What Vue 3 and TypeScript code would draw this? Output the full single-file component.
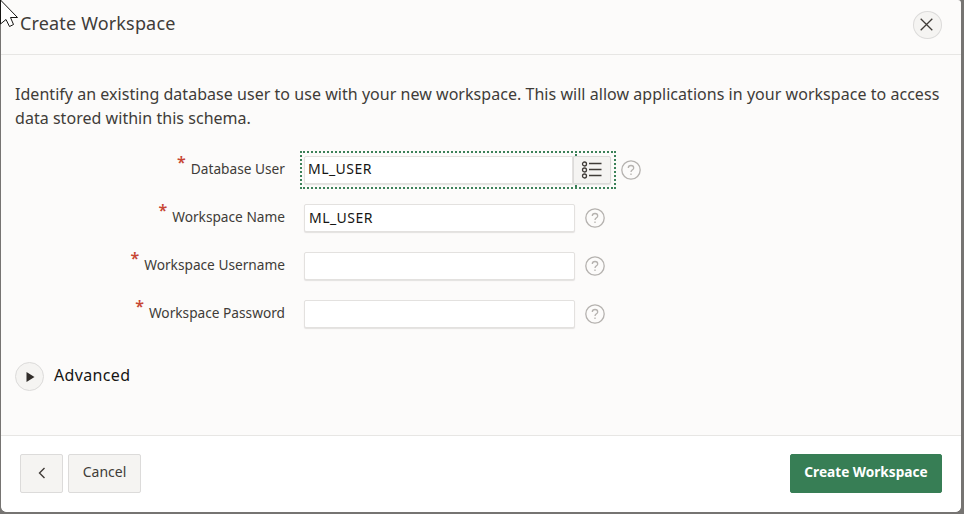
<script setup lang="ts">
import { ref } from 'vue'

interface Field {
  id: string
  label: string
  type: string
  value: string
  picker?: boolean
}

const fields = ref<Field[]>([
  { id: 'db-user', label: 'Database User', type: 'text', value: 'ML_USER', picker: true },
  { id: 'ws-name', label: 'Workspace Name', type: 'text', value: 'ML_USER' },
  { id: 'ws-username', label: 'Workspace Username', type: 'text', value: '' },
  { id: 'ws-password', label: 'Workspace Password', type: 'password', value: '' },
])
</script>

<template>
  <div class="backdrop">
    <section class="dialog" role="dialog">
      <header class="header">
        <h1 class="title">Create Workspace</h1>
        <button class="close" aria-label="Close">
          <svg width="13" height="13" viewBox="0 0 13 13"><path d="M.7 .7 12.3 12.3M12.3 .7 .7 12.3" /></svg>
        </button>
      </header>

      <main class="body">
        <p class="intro">
          <span class="line">Identify an existing database user to use with your new workspace. This will allow applications in your workspace to access</span>
          <span class="line">data stored within this schema.</span>
        </p>

        <form class="form">
          <div v-for="f in fields" :key="f.id" class="row">
            <label class="label" :for="f.id"><span class="star">*</span><span>{{ f.label }}</span></label>
            <div class="control" :class="{ picked: f.picker }">
              <input :id="f.id" v-model="f.value" class="input" :type="f.type" autocomplete="off" />
              <button v-if="f.picker" type="button" class="list" aria-label="Select">
                <svg width="22" height="20" viewBox="0 0 22 20">
                  <circle cx="3.5" cy="4" r="2" /><circle cx="3.5" cy="10" r="2" /><circle cx="3.5" cy="16" r="2" />
                  <path d="M8 3.5H20.5M8 9.5H20.5M8 15.5H20.5" />
                </svg>
              </button>
            </div>
            <svg class="help" width="20" height="20" viewBox="0 0 20 20">
              <circle cx="10" cy="10" r="9.2" />
              <path d="M7.3 8.1C7.3 6.3 8.5 5.5 10 5.5S12.7 6.4 12.7 7.9C12.7 9.9 10 9.7 10 12.1" />
              <path d="M10 13.6V15" />
            </svg>
          </div>
        </form>

        <div class="advanced">
          <button class="toggle" aria-label="Expand">
            <svg width="9" height="10" viewBox="0 0 9 10"><path d="M.5 0 8.5 5 .5 10Z" /></svg>
          </button>
          <h2 class="advanced-title">Advanced</h2>
        </div>
      </main>

      <footer class="footer">
        <button class="button back" aria-label="Back">
          <svg width="8" height="12" viewBox="0 0 8 12"><path d="M6.5 1 1.5 6 6.5 11" /></svg>
        </button>
        <button class="button cancel">Cancel</button>
        <button class="button create">Create Workspace</button>
      </footer>
    </section>
    <svg class="cursor" width="20" height="28" viewBox="0 0 20 28">
      <path d="M.5 0 17.5 17.5H10.5L13.5 24.5 9.5 26.5 6 19.5 .5 24Z" />
    </svg>
  </div>
</template>

<style>
body {
  overflow: hidden;
}
</style>

<style scoped>
.backdrop {
  position: relative;
  box-sizing: border-box;
  width: 964px;
  height: 514px;
  padding: 0 3px 2px 1px;
  background: #767472;
  color: #403c38;
  font-family: "Noto Sans", "Open Sans", sans-serif;
}
.backdrop * {
  box-sizing: border-box;
}
.dialog {
  display: flex;
  flex-direction: column;
  height: 512px;
  overflow: hidden;
  border-radius: 0 3px 6px 6px;
  background: #fcfbfa;
}
button {
  display: flex;
  align-items: center;
  justify-content: center;
  padding: 0;
  border: 1px solid #dcdbda;
  background: #f5f4f2;
  color: #403c38;
  font-family: inherit;
}
svg {
  display: block;
  fill: none;
  stroke: #403c38;
}
.header {
  display: flex;
  flex: none;
  align-items: flex-start;
  justify-content: space-between;
  height: 55px;
  padding: 11px 19px 0;
  border-bottom: 1px solid #e7e6e4;
}
.title {
  margin: 0;
  font-size: 18px;
  font-weight: 400;
  letter-spacing: 0.16px;
  line-height: 25px;
}
.close,
.toggle {
  width: 29px;
  height: 29px;
  border-radius: 50%;
}
.close {
  height: 28px;
  padding-right: 2px;
  padding-bottom: 1px;
}
.close svg {
  stroke-width: 1.3;
}
.body {
  flex: 1;
  padding: 27px 14px 0;
}
.intro {
  margin: 0 0 16px;
  font-size: 16px;
  letter-spacing: 0.037px;
  line-height: 24px;
}
.line {
  display: block;
  white-space: nowrap;
}
.row {
  display: flex;
  align-items: center;
  height: 48px;
}
.label {
  display: flex;
  align-items: flex-start;
  justify-content: flex-end;
  width: 270px;
  margin-right: 19px;
  padding-bottom: 2px;
  font-size: 13.7px;
  line-height: 20px;
  white-space: nowrap;
}
.star {
  margin-top: -7px;
  margin-right: 5px;
  color: #c74634;
  font-size: 16px;
  font-weight: 600;
  line-height: 20px;
}
.input {
  width: 271px;
  height: 28px;
  padding: 0 4px 2px;
  border: 1px solid #e3e1df;
  border-radius: 2px;
  outline: none;
  background: #fff;
  box-shadow: 0 1px 1px #e3e1df;
  color: #161513;
  font-family: inherit;
  font-size: 14px;
  letter-spacing: 0.45px;
}
.control {
  display: flex;
  margin-right: 10px;
}
.picked {
  position: relative;
  margin: 0 5px 0 -4px;
  padding: 3px 2px;
  border: 2px dotted #3c8159;
}
.picked::before,
.picked::after {
  position: absolute;
  left: 273px;
  width: 0;
  height: 2px;
  border-left: 2px solid #3c8159;
  content: "";
}
.picked::before {
  top: 1px;
}
.picked::after {
  bottom: 0;
}
.picked .input {
  width: 269px;
  padding: 0 3px 3px;
  border-radius: 2px 0 0 2px;
}
.list {
  width: 38px;
  height: 28px;
  margin-right: 1px;
  border-radius: 0 2px 2px 0;
  box-shadow: 0 1px 1px #e3e1df;
}
.list svg {
  stroke-width: 1.3;
}
.help {
  stroke: #b5b2af;
  stroke-width: 1.3;
}
.advanced {
  display: flex;
  align-items: center;
  margin-top: 23px;
  padding-top: 1px;
}
.toggle {
  padding-left: 1px;
}
.toggle svg {
  fill: #312d2a;
  stroke: none;
}
.advanced-title {
  margin: 0 0 0 10px;
  padding-bottom: 3px;
  color: #161513;
  font-size: 16px;
  font-weight: 400;
  letter-spacing: 0.35px;
  line-height: 24px;
}
.footer {
  display: flex;
  flex: none;
  gap: 5px;
  height: 77px;
  padding: 18px 19px 0;
  border-top: 1px solid #e7e6e4;
  background: #fff;
}
.button {
  height: 39px;
  padding-bottom: 4px;
  border-radius: 2px;
  font-size: 14px;
}
.back {
  width: 43px;
  padding: 0 0 1px;
}
.back svg {
  stroke-width: 1.4;
}
.cancel {
  width: 73px;
}
.create {
  width: 152px;
  margin-left: auto;
  border-color: #377e55;
  background: #377e55;
  color: #fff;
  font-size: 13.65px;
  font-weight: 700;
}
.cursor {
  position: absolute;
  top: 0;
  left: 0;
}
.cursor path {
  fill: #fff;
  stroke: #161513;
}
</style>
